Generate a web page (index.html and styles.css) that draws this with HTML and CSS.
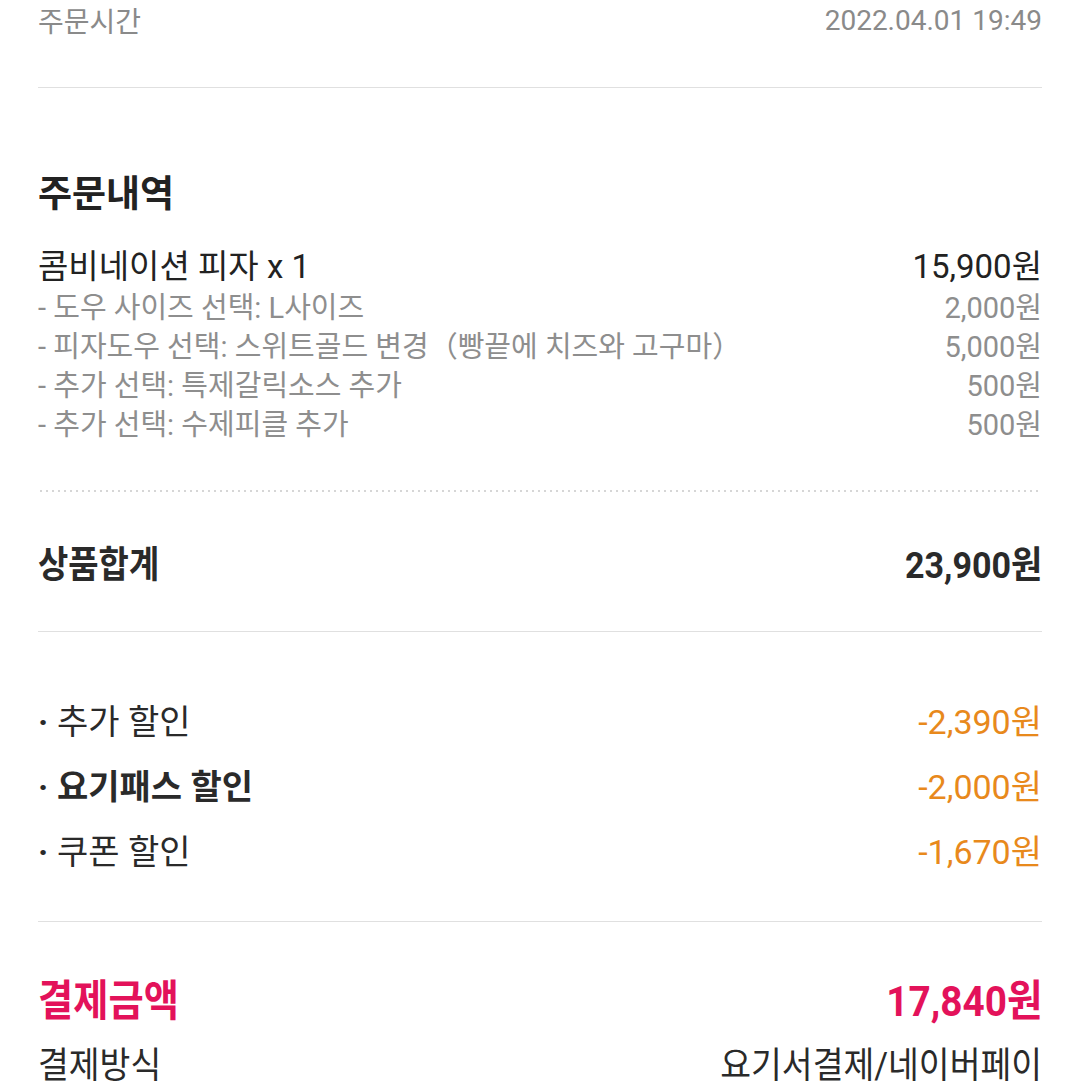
FILE: index.html
```html
<!DOCTYPE html>
<html lang="ko">
<head>
<meta charset="utf-8">
<link rel="stylesheet" href="styles.css">
</head>
<body>
<div class="page">
  <div class="row time-row">
    <span>주문시간</span>
    <span>2022.04.01 19:49</span>
  </div>
  <div class="divider"></div>

  <section class="order">
    <h2 class="title">주문내역</h2>
    <div class="row item">
      <span>콤비네이션 피자 x 1</span>
      <span>15,900원</span>
    </div>
    <div class="row option"><span>- 도우 사이즈 선택: L사이즈</span><span>2,000원</span></div>
    <div class="row option"><span>- 피자도우 선택: 스위트골드 변경（빵끝에 치즈와 고구마）</span><span>5,000원</span></div>
    <div class="row option"><span>- 추가 선택: 특제갈릭소스 추가</span><span>500원</span></div>
    <div class="row option"><span>- 추가 선택: 수제피클 추가</span><span>500원</span></div>
  </section>
  <div class="dotted"></div>

  <div class="row subtotal">
    <span class="sq-l">상품합계</span>
    <span class="sq-r">23,900원</span>
  </div>
  <div class="divider"></div>

  <section class="discounts">
    <div class="row discount"><span><span class="dot">·</span>추가 할인</span><span class="orange">-2,390원</span></div>
    <div class="row discount"><span class="bold"><span class="dot">·</span>요기패스 할인</span><span class="orange">-2,000원</span></div>
    <div class="row discount"><span><span class="dot">·</span>쿠폰 할인</span><span class="orange">-1,670원</span></div>
  </section>
  <div class="divider"></div>

  <div class="row total">
    <span class="sq-l">결제금액</span>
    <span class="sq-r">17,840원</span>
  </div>
  <div class="row method">
    <span class="sq-l">결제방식</span>
    <span class="sq-r">요기서결제/네이버페이</span>
  </div>
</div>
</body>
</html>
```

FILE: styles.css
```css
html, body {
  margin: 0;
  padding: 0;
  background: #ffffff;
}
body {
  font-family: "Roboto", "Noto Sans CJK KR", sans-serif;
  color: #222222;
  overflow: hidden;
  height: 1086px;
}
.page {
  padding: 0 38px;
}
.row {
  display: flex;
  justify-content: space-between;
  align-items: center;
  white-space: nowrap;
}
.sq-l {
  display: inline-block;
  transform: scaleX(0.89);
  transform-origin: left center;
}
.sq-r {
  display: inline-block;
  transform: scaleX(0.9);
  transform-origin: right center;
}
.time-row {
  height: 40px;
  margin-bottom: 47px;
  font-size: 28px;
  color: #8a8a8a;
}
.divider {
  height: 1px;
  background: #e0e0e0;
}
.order {
  padding-top: 82px;
  padding-bottom: 49px;
}
.title {
  margin: 0 0 23px;
  height: 50px;
  line-height: 50px;
  font-size: 37px;
  font-weight: 700;
  color: #222;
}
.item {
  height: 42px;
  font-size: 33px;
  color: #222;
}
.option {
  height: 39px;
  font-size: 29px;
  color: #8e8e8e;
}
.dotted {
  height: 2px;
  margin: 0 2px;
  background-image: linear-gradient(to right, #d6d6d6 2px, transparent 2px);
  background-size: 6px 2px;
  background-repeat: repeat-x;
}
.subtotal {
  height: 50px;
  margin-top: 45px;
  margin-bottom: 44px;
  font-size: 37px;
  font-weight: 700;
  color: #2a2a2a;
}
.subtotal .sq-r {
  transform: scaleX(0.92);
}
.bold {
  font-weight: 700;
}
.discounts {
  padding-top: 55px;
  padding-bottom: 39px;
}
.discount {
  height: 65px;
  font-size: 34px;
  color: #2a2a2a;
}
.dot {
  display: inline-block;
  width: 19px;
  font-weight: 700;
}
.orange {
  color: #e8891c;
}
.total {
  height: 56px;
  margin-top: 47px;
  font-size: 43px;
  font-weight: 700;
  color: #e3125a;
}
.method {
  height: 50px;
  margin-top: 12px;
  font-size: 36px;
  color: #2a2a2a;
}
.method .sq-l, .method .sq-r {
  transform: scaleX(0.93);
}
```
